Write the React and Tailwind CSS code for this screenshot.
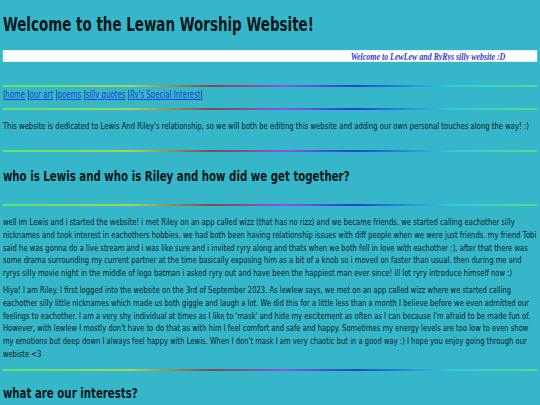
const navLinks = ['home', 'our art', 'poems', 'silly quotes', "Ry's Special Interest"];

const lewisText =
  "well im Lewis and i started the website! i met Riley on an app called wizz (that has no rizz) and we became friends. we started calling eachother silly nicknames and took interest in eachothers hobbies. we had both been having relationship issues with diff people when we were just friends. my friend Tobi said he was gonna do a live stream and i was like sure and i invited ryry along and thats when we both fell in love with eachother :), after that there was some drama surrounding my current partner at the time basically exposing him as a bit of a knob so i moved on faster than usual. then during me and ryrys silly movie night in the middle of lego batman i asked ryry out and have been the happiest man ever since! ill let ryry introduce himself now :)";

const rileyText =
  "Hiya! I am Riley. I first logged into the website on the 3rd of September 2023. As lewlew says, we met on an app called wizz where we started calling eachother silly little nicknames which made us both giggle and laugh a lot. We did this for a little less than a month I believe before we even admitted our feelings to eachother. I am a very shy individual at times as I like to 'mask' and hide my excitement as often as I can because I'm afraid to be made fun of. However, with lewlew I mostly don't have to do that as with him I feel comfort and safe and happy. Sometimes my energy levels are too low to even show my emotions but deep down I always feel happy with Lewis. When I don't mask I am very chaotic but in a good way :) I hope you enjoy going through our webiste <3";

// rainbow divider used between every section
function Rainbow({ className = '' }) {
  return (
    <div
      className={`h-[2px] bg-[linear-gradient(to_right,#5fe36a_0%,#a6d35a_24%,#7e4a52_39%,#8a56e6_53%,#1b48cf_66%,#2fcbe0_84%,#4de08a_100%)] ${className}`}
    />
  );
}

export default function App() {
  return (
    <div className="w-[540px] h-[405px] overflow-hidden bg-[#36b6c9] font-['DejaVu_Sans',sans-serif] text-[#0a1c20]">
      <div className="w-[750px] origin-top-left scale-x-[0.72] px-[4px] pt-[14px]">
        <h1 className="m-0 text-[18.7px] leading-[22px] font-bold text-[#06161a]">
          Welcome to the Lewan Worship Website!
        </h1>

        {/* scrolling banner */}
        <div className="mt-[13.5px] h-[12.5px] bg-white border border-[#d8f2f6] overflow-hidden whitespace-nowrap">
          <span className="block pl-[482px] font-['Liberation_Serif',serif] italic font-bold text-[11px] leading-[11px] text-[#3a34d2]">
            Welcome to LewLew and RyRys silly website :D
          </span>
        </div>

        <Rainbow className="mt-[23px]" />
        <nav className="mt-[1.5px] text-[9.7px] leading-[12.8px]">
          |
          {navLinks.map((link, i) => (
            <span key={link}>
              <a href="#" className="text-[#1c3fd4] underline">
                {link}
              </a>
              {i < navLinks.length - 1 ? ' |' : '|'}
            </span>
          ))}
        </nav>
        <Rainbow className="mt-[7px]" />

        <p className="mt-[10px] text-[9.5px] leading-[12.8px]">
          This website is dedicated to Lewis And Riley's relationship, so we will both be editing this website and
          adding our own personal touches along the way! :)
        </p>
        <Rainbow className="mt-[17px]" />

        <h2 className="mt-[14.5px] text-[14.2px] leading-[18px] font-bold text-[#06161a]">
          who is Lewis and who is Riley and how did we get together?
        </h2>
        <Rainbow className="mt-[19px]" />

        <p className="mt-[10.5px] text-[9.52px] leading-[12.8px]">{lewisText}</p>
        <p className="mt-[4px] text-[9.45px] leading-[12.8px]">{rileyText}</p>
        <Rainbow className="mt-[8.5px]" />

        <h2 className="mt-[13px] text-[14.2px] leading-[18px] font-bold text-[#06161a]">what are our interests?</h2>
      </div>
    </div>
  );
}
